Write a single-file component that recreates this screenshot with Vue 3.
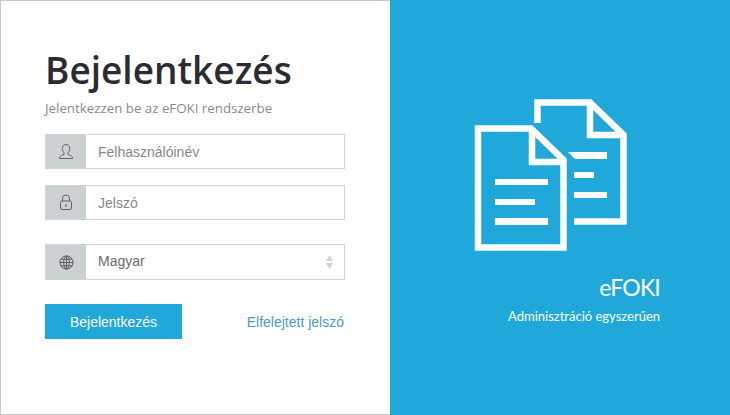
<script setup>
const fields = [
  { key: 'user', label: 'Felhasználóinév' },
  { key: 'lock', label: 'Jelszó' },
]
</script>

<template>
  <div class="page">
    <main class="panel">
      <h1 class="title">Bejelentkezés</h1>
      <p class="subtitle">Jelentkezzen be az eFOKI rendszerbe</p>

      <div v-for="f in fields" :key="f.key" class="field">
        <span class="addon">
          <svg v-if="f.key === 'user'" width="16" height="17" viewBox="0 0 16 17" fill="none" stroke="#5f6468" stroke-width="1">
            <path d="M8 1.500c-2.400 0-3.700 1.700-3.700 4 0 1.800.7 3.200 1.700 4.200v1.600c-1 .9-4 1.200-4.600 3.200v1h13.200v-1c-.6-2-3.600-2.300-4.600-3.200V9.700c1-1 1.700-2.400 1.700-4.200 0-2.300-1.300-4-3.700-4z" />
          </svg>
          <svg v-else width="14" height="17" viewBox="0 0 14 17" fill="none" stroke="#5f6468" stroke-width="1">
            <path d="M3.500 7V4.500a3.500 3.500 0 0 1 7 0V7" />
            <rect x="1.500" y="7" width="11" height="8.500" rx="1.500" />
            <path d="M7 10.500v2" stroke-width="1.500" />
          </svg>
        </span>
        <span class="value placeholder">{{ f.label }}</span>
      </div>

      <div class="field select">
        <span class="addon">
          <svg width="15" height="15" viewBox="0 0 16 16" fill="none" stroke="#54595d" stroke-width="1">
            <circle cx="8" cy="8" r="7" />
            <ellipse cx="8" cy="8" rx="3" ry="7" />
            <path d="M8 1v14M1 8h14M2 4.500h12M2 11.500h12" />
          </svg>
        </span>
        <span class="value lang">Magyar</span>
        <svg class="arrows" width="7" height="14" viewBox="0 0 7 14" fill="#cfd1d3">
          <path d="M3.500 0L7 6H0zM3.500 14L0 8h7z" />
        </svg>
      </div>

      <div class="actions">
        <button class="submit" type="button">Bejelentkezés</button>
        <a class="forgot" href="#">Elfelejtett jelszó</a>
      </div>
    </main>

    <aside class="brand">
      <svg class="docs" width="160" height="160" viewBox="470 95 160 160" fill="none" stroke="#fff" stroke-width="6.500" stroke-miterlimit="8">
        <path d="M537.500 123V102.500H590L623.500 135V221.500H574" />
        <path d="M590 102V135H624" />
        <path fill="#fff" stroke="none" d="M568 152H607V159H575zM574 172H594V178H574zM574 192H607V198H574z" />
        <path d="M478 128.500H531L563.500 160V247.500H478Z" />
        <path d="M532 128V162H564" />
        <path fill="#fff" stroke="none" d="M495 179H548V185H495zM495 199H535V205H495zM495 218H548V225H495z" />
      </svg>
      <div class="brand-name">eFOKI</div>
      <div class="brand-tag">Adminisztráció egyszerűen</div>
    </aside>
  </div>
</template>

<style>
html, body { margin: 0; background: #fff; }
</style>

<style scoped>
.page {
  display: flex;
  width: 730px;
  height: 415px;
  overflow: hidden;
  font-family: "Liberation Sans", Arial, sans-serif;
}
.panel {
  box-sizing: border-box;
  width: 390px;
  height: 415px;
  padding: 43px 44px 0;
  background: #fff;
  border: 1px solid #c8c8c8;
  border-right: 0;
}
.title {
  margin: 0;
  font: 600 37px/52px "Open Sans", sans-serif;
  color: #2b2c33;
}
.subtitle {
  margin: 3px 0 17px;
  font: 400 13.3px/18px "Open Sans", sans-serif;
  color: #858a8f;
}
.field {
  box-sizing: border-box;
  display: flex;
  align-items: center;
  width: 300px;
  height: 35px;
  margin-bottom: 16px;
  border: 1px solid #d2d2d2;
  background: #fff;
}
.select {
  height: 36px;
  margin-top: 24px;
}
.addon {
  display: flex;
  align-items: center;
  justify-content: center;
  flex: none;
  align-self: stretch;
  width: 40px;
  background: #ccd1d4;
}
.value {
  flex: 1;
  padding-left: 12px;
  font-size: 14px;
  color: #696b6e;
}
.lang {
  padding-bottom: 2px;
}
.placeholder {
  color: #85898d;
}
.arrows {
  margin-right: 11px;
}
.actions {
  display: flex;
  align-items: center;
  justify-content: space-between;
  width: 300px;
  margin-top: 24px;
}
.submit {
  width: 137px;
  height: 35px;
  padding: 0;
  border: 0;
  background: #21a8da;
  color: #fff;
  font: 400 14px "Liberation Sans", Arial, sans-serif;
}
.forgot {
  margin-right: 1px;
  font-size: 14px;
  color: #4d9ac4;
  text-decoration: none;
}
.brand {
  box-sizing: border-box;
  display: flex;
  flex-direction: column;
  align-items: flex-end;
  width: 340px;
  height: 415px;
  padding: 95px 70px 0 0;
  background: #21a8da;
  color: #fff;
}
.docs {
  display: block;
  margin-right: 30px;
}
.brand-name {
  margin-top: 16px;
  font: 400 23px/32px Lato, sans-serif;
  letter-spacing: -.8px;
}
.brand-tag {
  margin-top: 4px;
  font: 400 13px/18px Lato, sans-serif;
}
</style>
